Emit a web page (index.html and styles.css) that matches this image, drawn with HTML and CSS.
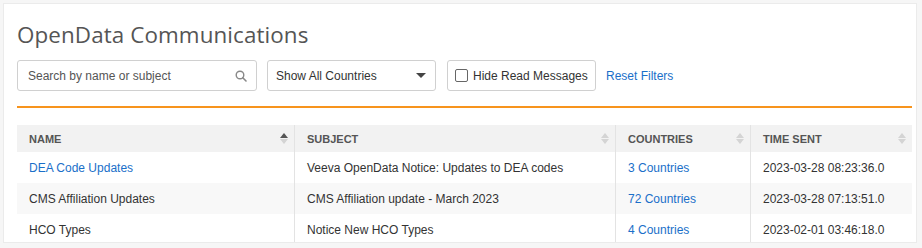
FILE: index.html
```html
<!DOCTYPE html>
<html lang="en">
<head>
    <meta charset="UTF-8">
    <title>OpenData Communications</title>
    <link rel="stylesheet" href="styles.css">
</head>
<body>
    <div class="panel">
        <h1 class="title">OpenData Communications</h1>
        <div class="filters">
            <div class="search">
                <input type="text" placeholder="Search by name or subject">
                <svg class="search-icon" width="12" height="12" viewBox="0 0 12 12">
                    <circle cx="5" cy="5" r="3.8" fill="none" stroke="#888" stroke-width="1.4"/>
                    <line x1="7.8" y1="7.8" x2="11" y2="11" stroke="#888" stroke-width="1.6" stroke-linecap="round"/>
                </svg>
            </div>
            <div class="select">
                <span>Show All Countries</span>
                <span class="caret"></span>
            </div>
            <label class="check">
                <span class="box"></span>
                Hide Read Messages
            </label>
            <a class="reset" href="#">Reset Filters</a>
        </div>
        <div class="rule"></div>
        <table class="grid">
            <thead>
                <tr>
                    <th class="col-name">Name<span class="sort active"></span></th>
                    <th class="col-subject">Subject<span class="sort"></span></th>
                    <th class="col-countries">Countries<span class="sort"></span></th>
                    <th class="col-time">Time Sent<span class="sort"></span></th>
                </tr>
            </thead>
            <tbody>
                <tr>
                    <td><a href="#">DEA Code Updates</a></td>
                    <td>Veeva OpenData Notice: Updates to DEA codes</td>
                    <td><a href="#">3 Countries</a></td>
                    <td>2023-03-28 08:23:36.0</td>
                </tr>
                <tr>
                    <td>CMS Affiliation Updates</td>
                    <td>CMS Affiliation update - March 2023</td>
                    <td><a href="#">72 Countries</a></td>
                    <td>2023-03-28 07:13:51.0</td>
                </tr>
                <tr>
                    <td>HCO Types</td>
                    <td>Notice New HCO Types</td>
                    <td><a href="#">4 Countries</a></td>
                    <td>2023-02-01 03:46:18.0</td>
                </tr>
            </tbody>
        </table>
    </div>
</body>
</html>
```

FILE: styles.css
```css
body {
    margin: 0;
    background: #f6f6f6;
    font-family: 'Liberation Sans', Arial, sans-serif;
    font-size: 12px;
    color: #333;
}
.panel {
    margin: 3px 5px 0 3px;
    background: white;
    border: 1px solid #ebebeb;
    padding: 16px 4px 0 13px;
    height: 240px;
    box-sizing: border-box;
    overflow: hidden;
}
.title {
    margin: 0;
    font-family: 'Open Sans', sans-serif;
    font-weight: normal;
    font-size: 22.4px;
    line-height: 30px;
    color: #555;
    letter-spacing: 0.1px;
}
.filters {
    display: flex;
    align-items: center;
    gap: 10px;
    margin-top: 10px;
    height: 31px;
}
.search {
    position: relative;
    width: 240px;
    height: 31px;
}
.search input {
    width: 100%;
    height: 100%;
    box-sizing: border-box;
    border: 1px solid #d0d0d0;
    border-radius: 3px;
    padding: 0 10px;
    font-family: inherit;
    font-size: 12px;
    color: #333;
    outline: none;
}
.search input::placeholder {
    color: #555;
}
.search-icon {
    position: absolute;
    right: 10px;
    top: 10px;
}
.select {
    width: 169px;
    height: 31px;
    box-sizing: border-box;
    border: 1px solid #d0d0d0;
    border-radius: 3px;
    display: flex;
    align-items: center;
    justify-content: space-between;
    padding: 0 8px 0 8px;
    color: #333;
}
.caret {
    width: 0;
    height: 0;
    border-left: 5px solid transparent;
    border-right: 5px solid transparent;
    border-top: 5px solid #444;
    margin-right: 1px;
}
.check {
    height: 31px;
    box-sizing: border-box;
    border: 1px solid #d0d0d0;
    border-radius: 3px;
    display: flex;
    align-items: center;
    gap: 5px;
    padding: 0 7px 0 7px;
    color: #333;
    width: 149px;
    margin-left: 1px;
}
.box {
    width: 11px;
    height: 11px;
    border: 1px solid #666;
    border-radius: 2px;
}
.reset {
    color: #1a6fc9;
    text-decoration: none;
}
.rule {
    height: 2px;
    background-color: #f7941d;
    margin-top: 15px;
}
.grid {
    margin-top: 17px;
    width: 100%;
    border-collapse: collapse;
}
.grid th {
    background: #f2f2f2;
    text-align: left;
    text-transform: uppercase;
    font-size: 11px;
    font-weight: bold;
    color: #555;
    height: 26px;
    padding: 1px 12px 0;
    position: relative;
    border-left: 1px solid #e3e3e3;
}
.grid td {
    height: 31px;
    padding: 0 12px;
    border-left: 1px solid #e3e3e3;
    color: #333;
}
.grid th:first-child,
.grid td:first-child {
    border-left: none;
}
.grid tbody tr:nth-child(2) td {
    background: #f8f8f8;
}
.grid a {
    color: #1a6fc9;
    text-decoration: none;
}
.col-name { width: 253px; }
.col-subject { width: 296px; }
.col-countries { width: 110px; }
.sort {
    position: absolute;
    right: 6px;
    top: 8px;
    width: 8px;
    height: 11px;
}
.sort::before,
.sort::after {
    content: '';
    position: absolute;
    left: 0;
    border-left: 4px solid transparent;
    border-right: 4px solid transparent;
}
.sort::before {
    top: 0;
    border-bottom: 5px solid #d4d4d4;
}
.sort::after {
    bottom: 0;
    border-top: 5px solid #d4d4d4;
}
.sort.active::before {
    border-bottom-color: #555;
}
```
